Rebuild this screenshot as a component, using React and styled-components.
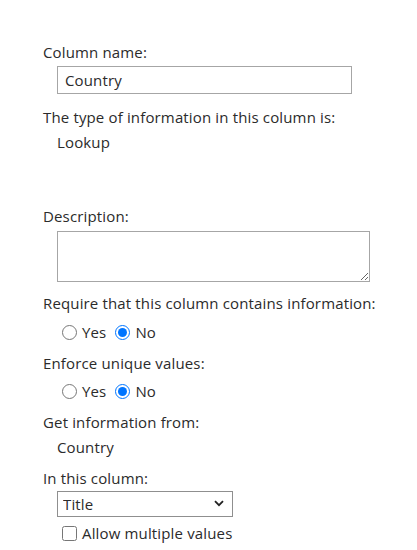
import React from 'react';
import styled, { createGlobalStyle } from 'styled-components';

const GlobalStyle = createGlobalStyle`
  body {
    margin: 0;
    background: #fff;
    font-family: 'Open Sans', 'Noto Sans', Arial, sans-serif;
    color: #2b2b2b;
  }
`;

const Form = styled.div`
  display: flex;
  flex-direction: column;
  padding: 42px 0 0 43px;
  font-size: 15px;
  line-height: 20px;
  letter-spacing: 0.15px;
`;

const Label = styled.div`
  margin-top: ${props => props.gap || 0}px;
`;

const Value = styled.div`
  margin-top: 5px;
  padding-left: 14px;
`;

const Field = styled.div`
  margin-top: ${props => props.gap || 4}px;
  padding-left: 14px;
  display: flex;
`;

const TextInput = styled.input`
  box-sizing: border-box;
  width: 295px;
  height: 28px;
  border: 1px solid #a6a6a6;
  padding: 0 7px;
  font: inherit;
  letter-spacing: inherit;
  color: #2b2b2b;
  outline: none;
`;

const TextArea = styled.textarea`
  box-sizing: border-box;
  width: 313px;
  height: 51px;
  border: 1px solid #a6a6a6;
  font: inherit;
  outline: none;
`;

const Options = styled.div`
  margin-top: ${props => props.gap || 9}px;
  padding-left: 19px;
  display: flex;
  align-items: center;
  height: 20px;
`;

const Option = styled.label`
  display: flex;
  align-items: center;
  margin-right: 9px;
`;

const Radio = styled.input.attrs({ type: 'radio' })`
  width: 15px;
  height: 15px;
  margin: 0 5px 0 0;
  accent-color: #0075ff;
`;

const SelectWrap = styled.div`
  position: relative;
  width: 176px;
  height: 26px;
`;

const Select = styled.select`
  box-sizing: border-box;
  width: 100%;
  height: 100%;
  appearance: none;
  border: 1px solid #8f8f8f;
  background: #fff;
  padding: 0 5px;
  font: inherit;
  letter-spacing: inherit;
  color: #2b2b2b;
  outline: none;
`;

const Chevron = styled.svg`
  position: absolute;
  right: 9px;
  top: 9px;
  pointer-events: none;
`;

const CheckRow = styled.label`
  margin-top: 6px;
  padding-left: 19px;
  display: flex;
  align-items: center;
  height: 20px;
`;

const Checkbox = styled.input.attrs({ type: 'checkbox' })`
  width: 15px;
  height: 15px;
  margin: 0 5px 0 0;
`;

const YesNo = ({ name, gap }) => (
  <Options gap={gap}>
    <Option>
      <Radio name={name} />
      Yes
    </Option>
    <Option>
      <Radio name={name} defaultChecked />
      No
    </Option>
  </Options>
);

export default function App() {
  return (
    <>
      <GlobalStyle />
      <Form>
        <Label>Column name:</Label>
        <Field>
          <TextInput defaultValue="Country" />
        </Field>
        <Label gap={13}>The type of information in this column is:</Label>
        <Value>Lookup</Value>
        <Label gap={54}>Description:</Label>
        <Field gap={5}>
          <TextArea />
        </Field>
        <Label gap={11}>Require that this column contains information:</Label>
        <YesNo name="required" />
        <Label gap={11}>Enforce unique values:</Label>
        <YesNo name="unique" gap={8} />
        <Label gap={11}>Get information from:</Label>
        <Value>Country</Value>
        <Label gap={11}>In this column:</Label>
        <Field gap={3}>
          <SelectWrap>
            <Select defaultValue="Title">
              <option>Title</option>
            </Select>
            <Chevron width="10" height="7" viewBox="0 0 10 7">
              <path d="M1 1.2 5 5.2 9 1.2" fill="none" stroke="#222" strokeWidth="1.8" />
            </Chevron>
          </SelectWrap>
        </Field>
        <CheckRow>
          <Checkbox />
          Allow multiple values
        </CheckRow>
      </Form>
    </>
  );
}
